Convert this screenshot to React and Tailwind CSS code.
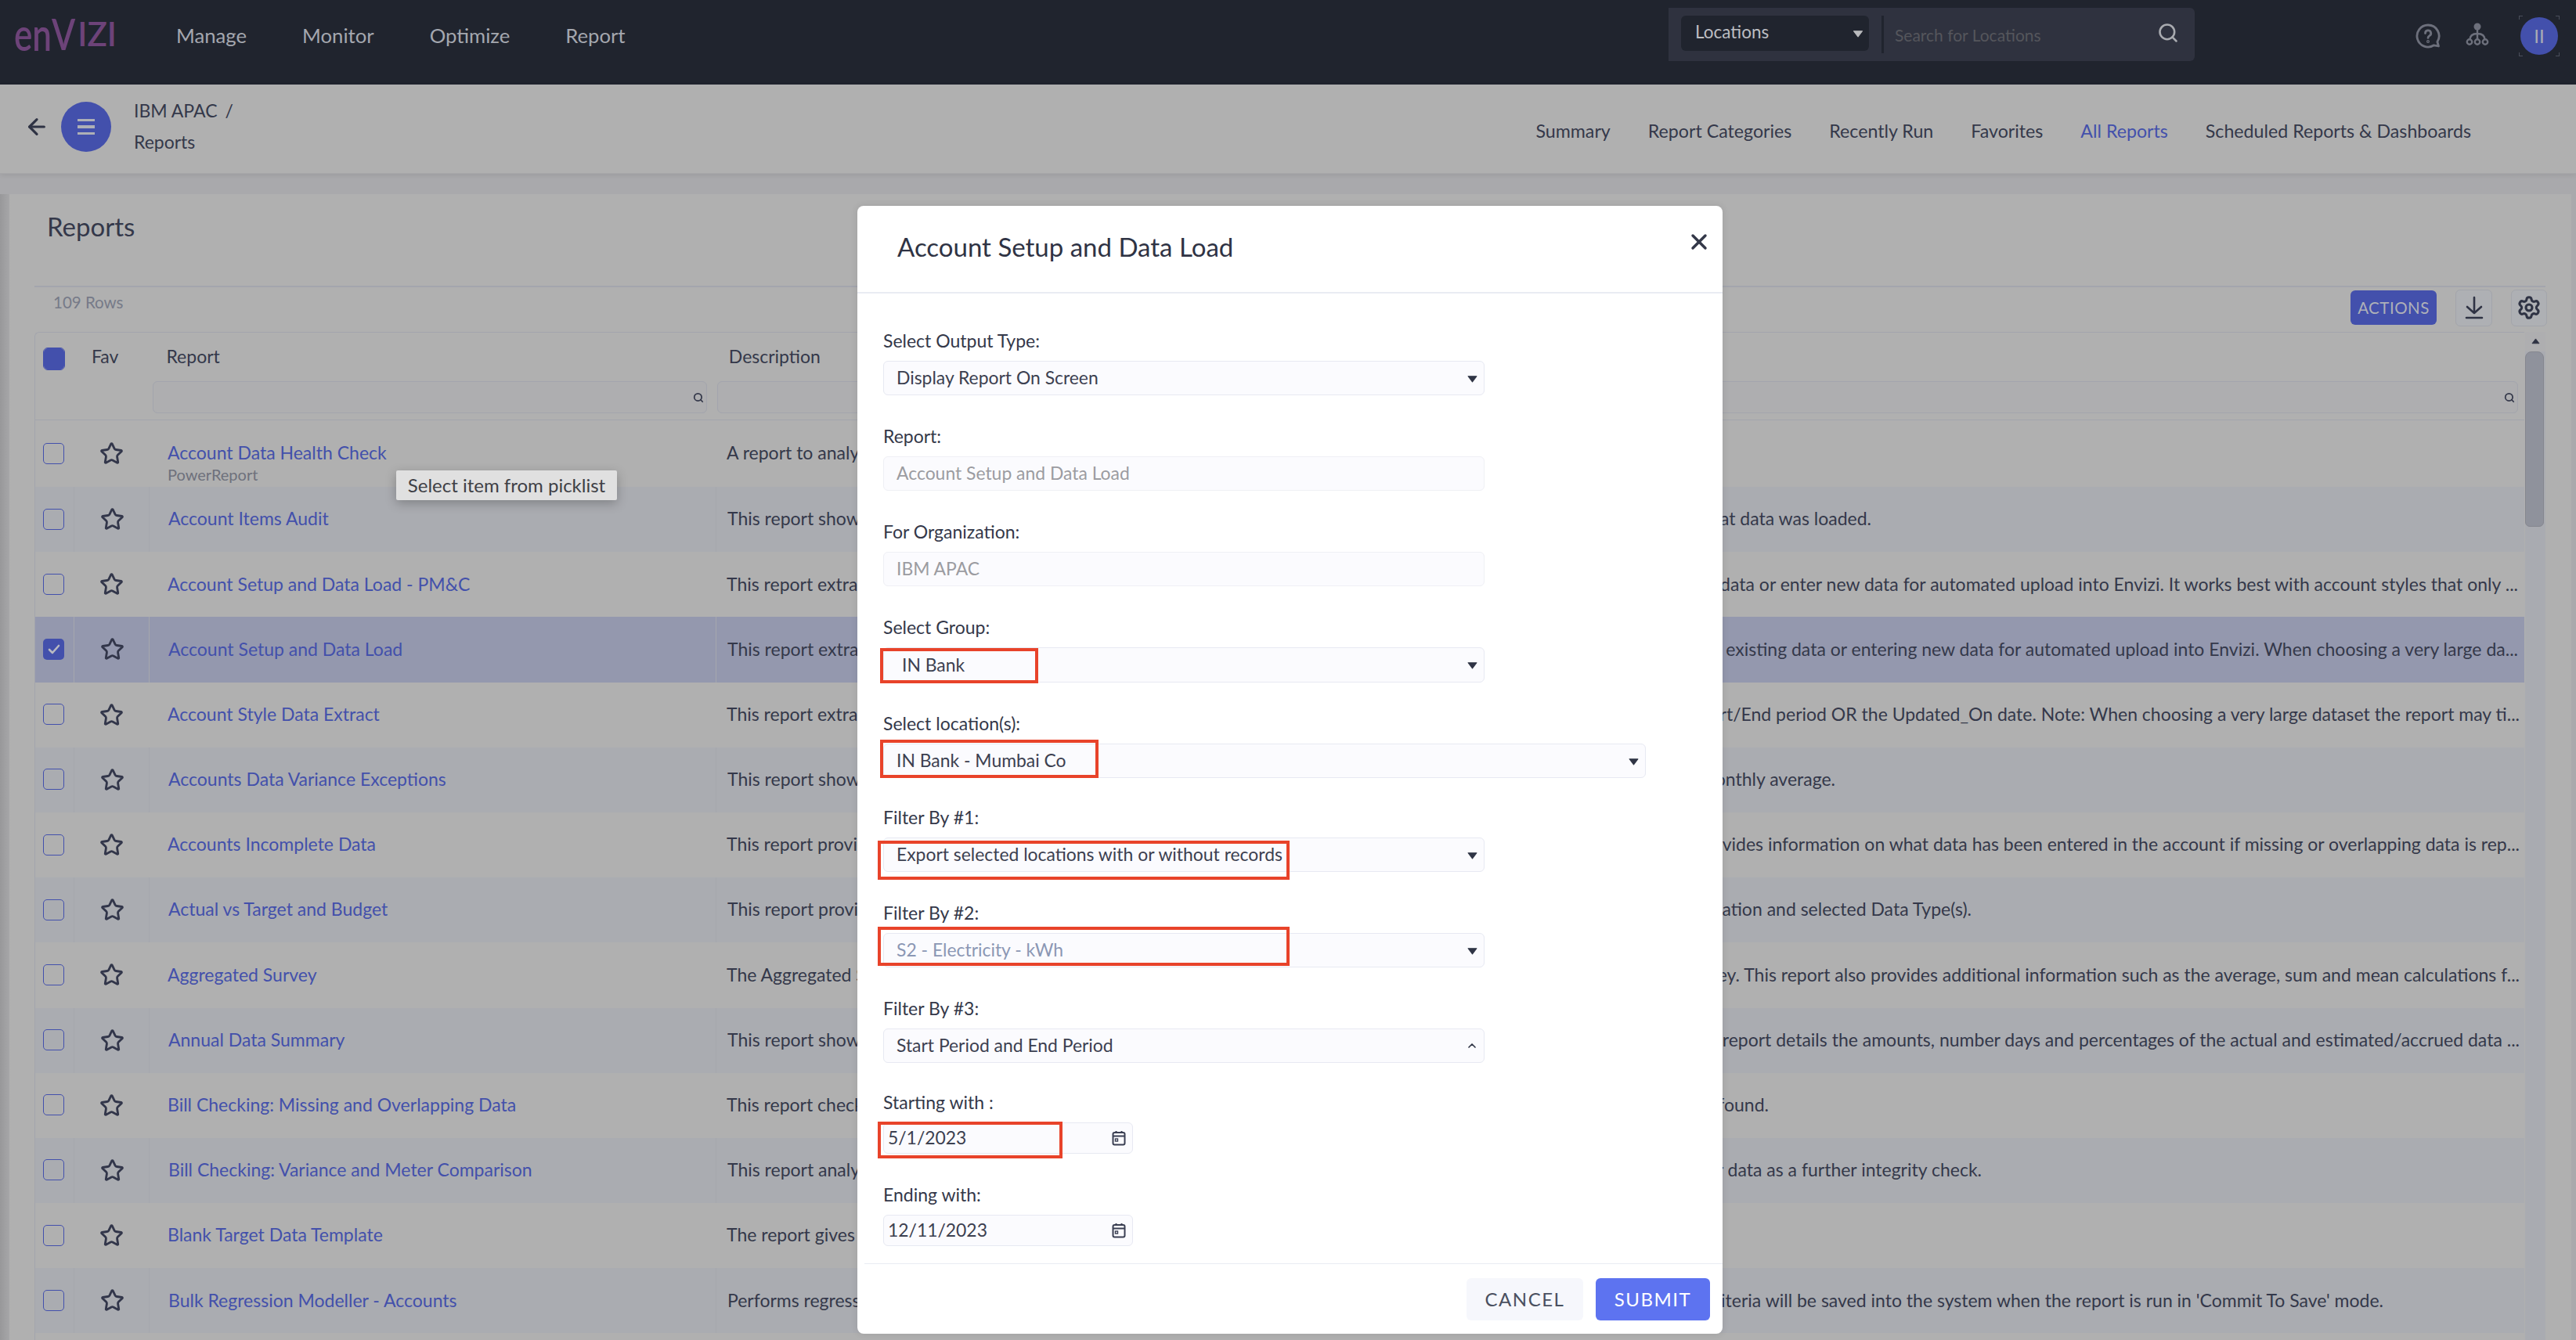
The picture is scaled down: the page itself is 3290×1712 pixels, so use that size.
import React from "react";
import { ArrowLeft, Star, X, Settings, Search, ChevronUp } from "lucide-react";

const rows = [
  { name: "Account Data Health Check", left: "A report to analyse", sub: "PowerReport" },
  { name: "Account Items Audit", left: "This report shows", right: "that data was loaded.", end: 2390 },
  { name: "Account Setup and Data Load - PM&C", left: "This report extracts", right: "data or enter new data for automated upload into Envizi. It works best with account styles that only ...", end: 3216 },
  { name: "Account Setup and Data Load", left: "This report extracts", right: "existing data or entering new data for automated upload into Envizi. When choosing a very large da...", end: 3216, selected: true },
  { name: "Account Style Data Extract", left: "This report extracts", right: "Start/End period OR the Updated_On date. Note: When choosing a very large dataset the report may ti...", end: 3218 },
  { name: "Accounts Data Variance Exceptions", left: "This report shows", right: "monthly average.", end: 2344 },
  { name: "Accounts Incomplete Data", left: "This report provides", right: "provides information on what data has been entered in the account if missing or overlapping data is rep...", end: 3218 },
  { name: "Actual vs Target and Budget", left: "This report provides", right: "location and selected Data Type(s).", end: 2518 },
  { name: "Aggregated Survey", left: "The Aggregated Survey", right: "survey. This report also provides additional information such as the average, sum and mean calculations f...", end: 3218 },
  { name: "Annual Data Summary", left: "This report shows", right: "The report details the amounts, number days and percentages of the actual and estimated/accrued data ...", end: 3218 },
  { name: "Bill Checking: Missing and Overlapping Data", left: "This report checks", right: "found.", end: 2259 },
  { name: "Bill Checking: Variance and Meter Comparison", left: "This report analyses", right: "meter data as a further integrity check.", end: 2531 },
  { name: "Blank Target Data Template", left: "The report gives" },
  { name: "Bulk Regression Modeller - Accounts", left: "Performs regression", right: "criteria will be saved into the system when the report is run in 'Commit To Save' mode.", end: 3044 },
  { name: "", left: "" },
];

function Caret({ className }) {
  return (
    <svg viewBox="0 0 12 10" className={className}>
      <path d="M1 2.5h10L6 9z" fill="currentColor" stroke="currentColor" strokeLinejoin="round" />
    </svg>
  );
}

function Calendar() {
  return (
    <svg viewBox="0 0 18 20" className="w-[18px] h-5 text-[#3a3f52]" fill="none" stroke="currentColor" strokeWidth="2">
      <rect x="1.5" y="3" width="15" height="15.5" rx="2" />
      <path d="M1.5 7.5h15M5.5 1v3M12.5 1v3" />
      <rect x="4.5" y="11" width="3" height="3" strokeWidth="1.4" />
    </svg>
  );
}

function Field({ label, children, className = "" }) {
  return (
    <div className={`mb-[38px] ${className}`}>
      <div className="h-[30px] mb-[10px] flex items-center text-[23px] text-[#343849] -translate-y-px">{label}</div>
      {children}
    </div>
  );
}

function Control({ className = "", textClass = "text-[#3c4050]", children, icon, box }) {
  return (
    <div className={`relative flex items-center justify-between rounded-md border border-[#e7e9f2] bg-[#fbfbfe] pl-4 pr-2 text-[22.9px] ${className}`}>
      <span className={`-mt-px ${textClass}`}>{children}</span>
      {icon}
      {box}
    </div>
  );
}

const caret = <Caret className="w-[13px] h-[11px] text-[#2f3445]" />;

function Row({ row, first, stripe }) {
  const bg = row.selected ? "bg-[#9498ae]" : stripe ? "bg-[#aaacb1]" : "bg-[#b0b0b0]";
  const sep = stripe ? "border-l border-[#a5a7ad]" : "";
  return (
    <div className={`flex shrink-0 ${first ? "h-[85px]" : "h-[83.2px]"} ${bg} text-[23px] whitespace-nowrap`}>
      <div className="w-[49px] flex items-center pl-[10px] -mt-[1px]">
        {row.selected ? (
          <div className="w-[27px] h-[27px] rounded-[5px] bg-[#4350ac] flex items-center justify-center">
            <svg viewBox="0 0 20 20" className="w-5 h-5" fill="none" stroke="#b9bac2" strokeWidth="2.6" strokeLinecap="round" strokeLinejoin="round">
              <path d="M4 11l4 4 8-9" />
            </svg>
          </div>
        ) : (
          <div className="w-[27px] h-[27px] rounded-[5px] border border-[#4350ac]" />
        )}
      </div>
      <div className={`w-[96px] flex items-center pl-[33px] ${sep}`}>
        <Star size={31} strokeWidth={2.2} className="text-[#32364a]" />
      </div>
      <div className={`w-[724px] flex items-center pl-[24px] text-[#4350ab] ${sep}`}>
        <div className="relative -mt-[2px]">
          {row.name}
          {row.sub && <div className="absolute left-0 top-[30px] text-[20px] text-[#6e717c]">{row.sub}</div>}
        </div>
      </div>
      <div className={`flex-1 flex items-center justify-between pl-[14px] text-[#34384a] ${sep}`}>
        <span className="-mt-[2px]">{row.left}</span>
        {row.right && <span className="-mt-[2px]" style={{ marginRight: 3224 - row.end }}>{row.right}</span>}
      </div>
    </div>
  );
}

export default function App() {
  return (
    <div className="relative w-[3290px] h-[1712px] overflow-hidden flex flex-col bg-[#a9a9ac] font-['Lato',sans-serif]">
      {/* top bar */}
      <header className="h-[108px] shrink-0 bg-[#20242e] flex items-start">
        <div className="w-[207px] pl-[18px] h-[108px] flex items-start pt-[13px] text-[#6d4379] font-semibold leading-[60px] whitespace-nowrap">
          <span className="inline-block text-[44px] scale-y-[1.3] origin-center">en</span>
          <span className="inline-block text-[44px] scale-y-[1.25] origin-center">V</span>
          <span className="inline-block text-[42px] ml-[3px]">IZI</span>
        </div>
        <nav className="ml-[18px] h-[90px] flex items-center gap-[71px] text-[25.7px] text-[#a4a7af]">
          <span>Manage</span>
          <span>Monitor</span>
          <span>Optimize</span>
          <span>Report</span>
        </nav>
        <div className="ml-auto mt-[10px] w-[672px] h-[68px] flex items-start pt-[10px] pl-4 bg-[#2f323f] rounded-r-md">
          <div className="w-[240px] h-[45px] rounded-md bg-[#20242e] flex items-center justify-between pl-[18px] pr-[7px] text-[22.5px] text-[#bdbec2]">
            <span className="-mt-[3px]">Locations</span>
            <Caret className="w-[14px] h-[11px] text-[#b9babd]" />
          </div>
          <div className="ml-[16px] w-[3px] h-[48px] bg-[#20242e]" />
          <div className="ml-[14px] h-[50px] flex items-center text-[21px] text-[#55565c] flex-1">
            <span>Search for Locations</span>
          </div>
          <Search size={28} strokeWidth={2.2} className="mr-[20px] mt-[8px] text-[#a9abb0]" />
        </div>
        <div className="ml-[282px] mt-[22px] mr-[23px] flex items-start">
          <svg viewBox="0 0 32 32" className="mt-[8px] w-[32px] h-[32px] text-[#6d707c]" fill="none" stroke="currentColor" strokeWidth="2.8" strokeLinecap="round" strokeLinejoin="round">
            <path d="M16 2a14 14 0 1 0 7.5 25.8l6 1.2-1.6-5.5A14 14 0 0 0 16 2z" />
            <path d="M12.5 12.5a3.6 3.6 0 1 1 5.4 3.1c-1.2.7-1.9 1.4-1.9 2.8" />
            <circle cx="16" cy="23" r="0.6" />
          </svg>
          <svg viewBox="0 0 30 30" className="ml-[32px] mt-[7px] w-[30px] h-[30px] text-[#6d707c]" fill="none" stroke="currentColor" strokeWidth="2.4">
            <circle cx="15" cy="5" r="4.5" fill="currentColor" stroke="none" />
            <path d="M15 9v13M15 14c-6 0-9.5 3-9.5 8M15 14c6 0 9.5 3 9.5 8" />
            <circle cx="5" cy="24.5" r="3.2" />
            <circle cx="15" cy="24.5" r="3.2" />
            <circle cx="25" cy="24.5" r="3.2" />
          </svg>
          <div className="relative ml-[40px] w-[48px] h-[48px] rounded-full bg-[#4350ac] flex items-center justify-center text-[24px] text-[#a9abb5]">
            II
            <span className="absolute -left-[2px] -top-[2px] w-[5px] h-[5px] border-l border-t border-[#4a4e5a]" />
            <span className="absolute -right-[2px] -top-[2px] w-[5px] h-[5px] border-r border-t border-[#4a4e5a]" />
            <span className="absolute -left-[2px] -bottom-[2px] w-[5px] h-[5px] border-l border-b border-[#4a4e5a]" />
            <span className="absolute -right-[2px] -bottom-[2px] w-[5px] h-[5px] border-r border-b border-[#4a4e5a]" />
          </div>
        </div>
      </header>

      {/* sub header */}
      <div className="h-[114px] shrink-0 bg-[#b0b0b0] flex items-center border-b border-[#a7a7a9] shadow-[0_2px_6px_rgba(0,0,0,0.08)]">
        <ArrowLeft size={32} strokeWidth={2.4} className="ml-[31px] text-[#2f3344] -mt-[5px]" />
        <div className="ml-[15px] w-[64px] h-[64px] rounded-full bg-[#4350ac] flex flex-col items-center justify-center gap-[5px] -mt-[5px]">
          <div className="w-[22px] h-[3.5px] bg-[#aeb0b6]" />
          <div className="w-[22px] h-[3.5px] bg-[#aeb0b6]" />
          <div className="w-[22px] h-[3.5px] bg-[#aeb0b6]" />
        </div>
        <div className="ml-[29px] text-[23px] text-[#34384a] leading-[40px] -mt-[7px]">
          <div>IBM APAC <span className="ml-1">/</span></div>
          <div>Reports</div>
        </div>
        <nav className="ml-auto mr-[134px] flex gap-[48px] text-[23.2px] text-[#34384a] mt-[5px]">
          <span>Summary</span>
          <span>Report Categories</span>
          <span>Recently Run</span>
          <span>Favorites</span>
          <span className="text-[#4350ab]">All Reports</span>
          <span>Scheduled Reports &amp; Dashboards</span>
        </nav>
      </div>

      {/* main */}
      <div className="relative flex-1 mt-[26px] flex min-h-0">
        <div className="w-[12px] bg-gradient-to-r from-[#98989a] to-[#a6a6a8]" />
        <main className="flex-1 mr-[6px] bg-[#b0b0b0] pl-[32px] pr-[33px] flex flex-col min-h-0">
          <div className="h-[117px] shrink-0 pl-[16px] pt-[16px] text-[33px] leading-[50px] text-[#34384a]">Reports</div>
          <div className="h-[59px] shrink-0 border-t-2 border-[#a3a5ad] flex items-center justify-between">
            <span className="ml-[24px] text-[20.5px] text-[#767a88] -mt-[19px]">109 Rows</span>
            <div className="flex items-center -mt-[5px] mr-[-2px]">
              <div className="w-[110px] h-[44px] rounded-md bg-[#4350ac] text-[20.5px] tracking-[0.5px] text-[#aeb0b8] flex items-center justify-center">ACTIONS</div>
              <div className="ml-[24px] w-[47px] h-[47px] rounded-md border border-[#a3a5ab] bg-[#aeb0b4] flex items-center justify-center">
                <svg viewBox="0 0 24 30" className="w-6 h-[30px]" fill="none" stroke="#2f3344" strokeWidth="2.6" strokeLinecap="round" strokeLinejoin="round">
                  <path d="M12 2v20M3 14l9 8 9-8M2 28h20" />
                </svg>
              </div>
              <div className="ml-[24px] w-[46px] h-[47px] rounded-md border border-[#a3a5ab] bg-[#aeb0b4] flex items-center justify-center">
                <Settings size={32} strokeWidth={2.3} className="text-[#2f3344]" />
              </div>
            </div>
          </div>
          <div className="flex-1 flex min-h-0">
            <div className="flex-1 flex flex-col min-w-0 border-l border-t border-[#a3a5ad] rounded-tl-md relative">
              <div className="h-[112px] shrink-0 border-b border-[#a3a5ad] relative">
                <div className="flex items-start pt-[20px] h-[62px] text-[23px] text-[#34384a]">
                  <div className="ml-[11px] w-[26px] h-[27px] rounded-[5px] bg-[#4350ac] border border-[#4350ac] outline outline-1 outline-[#4350ac]" />
                  <span className="ml-[35px] -mt-[7px]">Fav</span>
                  <span className="ml-[61px] -mt-[7px]">Report</span>
                  <span className="ml-[650px] -mt-[7px]">Description</span>
                </div>
                <div className="flex pl-[150px] pr-[8px] gap-[13px]">
                  <div className="w-[708px] h-[41px] rounded-md border border-[#a3a5ad] bg-[#aeaeb0] flex items-center justify-end pr-[3px]">
                    <Search size={14} strokeWidth={3} className="text-[#34384a]" />
                  </div>
                  <div className="flex-1 h-[41px] rounded-md border border-[#a3a5ad] bg-[#aeaeb0] flex items-center justify-end pr-[3px]">
                    <Search size={14} strokeWidth={3} className="text-[#34384a]" />
                  </div>
                </div>
              </div>
              {rows.map((r, i) => (
                <Row key={i} row={r} first={i === 0} stripe={i % 2 === 1} />
              ))}
              <div className="absolute left-[461px] top-[176px] w-[282px] h-[38px] bg-[#e0e0e0] rounded-[2px] shadow-[0_4px_14px_rgba(0,0,0,0.25)] text-[24px] text-[#3f4046] flex items-center justify-center whitespace-nowrap">
                Select item from picklist
              </div>
            </div>
            <div className="w-[26px] shrink-0 ml-[1px] bg-[#a9abb1] flex flex-col">
              <div className="h-[25px] bg-[#aeaeb0] flex items-center justify-center">
                <Caret className="w-[13px] h-[9px] rotate-180 text-[#2f3344]" />
              </div>
              <div className="w-[24px] h-[224px] rounded-b-md rounded-t-lg bg-[#8f929c] border border-[#85878f]" />
            </div>
          </div>
        </main>
      </div>

      {/* modal */}
      <div className="absolute left-[1095px] top-[263px] w-[1105px] h-[1441px] bg-white rounded-lg flex flex-col shadow-[0_0_10px_rgba(0,0,0,0.1)]">
        <div className="h-[112px] shrink-0 border-b-2 border-[#e9ecf3] flex items-start justify-between pl-[51px] pr-[14px]">
          <h1 className="mt-[28px] text-[33px] leading-[48px] text-[#2f3344]">Account Setup and Data Load</h1>
          <X size={32} strokeWidth={2.6} className="mt-[30px] text-[#343849]" />
        </div>
        <div className="flex-1 pt-[46px] pl-[33px] min-h-0 overflow-visible">
          <Field label="Select Output Type:">
            <Control className="w-[768px] h-[44px]" icon={caret}>Display Report On Screen</Control>
          </Field>
          <Field label="Report:">
            <Control className="w-[768px] h-[44px] border-[#eff0f5]" textClass="text-[#9b9ca1]">Account Setup and Data Load</Control>
          </Field>
          <Field label="For Organization:">
            <Control className="w-[768px] h-[44px] border-[#eff0f5]" textClass="text-[#9b9ca1]">IBM APAC</Control>
          </Field>
          <Field label="Select Group:">
            <Control
              className="w-[768px] h-[45px]"
              textClass="ml-[7px] text-[#3c4050]"
              icon={caret}
              box={<div className="absolute -left-[5px] top-0 w-[202px] h-[45px] border-[4px] border-[#e8432a]" />}
            >
              IN Bank
            </Control>
          </Field>
          <Field label="Select location(s):" className="!mb-[36px]">
            <Control
              className="w-[974px] h-[44px]"
              icon={caret}
              box={<div className="absolute -left-[5px] -top-[6px] w-[279px] h-[49px] border-[4px] border-[#e8432a]" />}
            >
              IN Bank - Mumbai Co
            </Control>
          </Field>
          <Field label="Filter By #1:">
            <Control
              className="w-[768px] h-[44px]"
              icon={caret}
              box={<div className="absolute -left-[8px] top-[3px] w-[526px] h-[50px] border-[4px] border-[#e8432a]" />}
            >
              Export selected locations with or without records
            </Control>
          </Field>
          <Field label="Filter By #2:">
            <Control
              className="w-[768px] h-[44px]"
              textClass="text-[#8b97b4]"
              icon={caret}
              box={<div className="absolute -left-[8px] -top-[9px] w-[526px] h-[50px] border-[4px] border-[#e8432a]" />}
            >
              S2 - Electricity - kWh
            </Control>
          </Field>
          <Field label="Filter By #3:">
            <Control className="w-[768px] h-[44px]" icon={<ChevronUp size={16} strokeWidth={2.5} className="text-[#2f3445] -mr-[1px]" />}>
              Start Period and End Period
            </Control>
          </Field>
          <Field label="Starting with :" className="!mb-[38px] -mt-[2px]">
            <Control
              className="w-[319px] h-[40px] !pl-[5px] !pr-[8px]"
              icon={<Calendar />}
              box={<div className="absolute -left-[8px] -top-[2px] w-[236px] h-[47px] border-[4px] border-[#e8432a]" />}
            >
              5/1/2023
            </Control>
          </Field>
          <Field label="Ending with:" className="!mb-0">
            <Control className="w-[319px] h-[40px] !pl-[5px] !pr-[8px]" icon={<Calendar />}>12/11/2023</Control>
          </Field>
        </div>
        <div className="h-[90px] shrink-0 ml-[9px] border-t border-[#e9ecf3] flex items-start justify-end pt-[18px] pr-[16px] gap-4 text-[24px] tracking-[1.5px]">
          <div className="w-[149px] h-[54px] rounded-md bg-[#f6f7fc] text-[#4a5060] flex items-center justify-center">CANCEL</div>
          <div className="w-[146px] h-[54px] rounded-md bg-[#5d73f0] text-white flex items-center justify-center">SUBMIT</div>
        </div>
      </div>
    </div>
  );
}
